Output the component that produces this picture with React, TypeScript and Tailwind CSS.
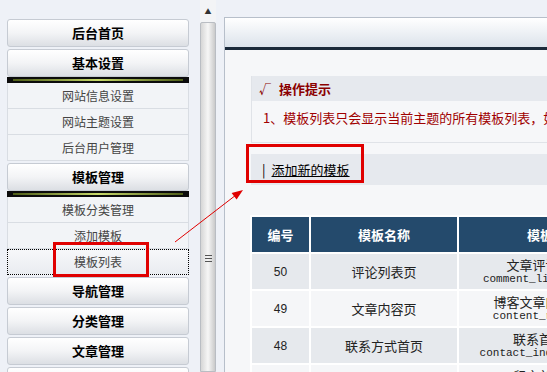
import React from 'react';

const cjk = { fontFamily: '"Noto Sans CJK SC", "Liberation Sans", sans-serif' };

const Header = ({ label }: { label: string }) => (
  <div className="mt-[2px] flex h-[28px] items-center justify-center rounded-[3px] border border-[#c6cbd3] bg-gradient-to-b from-white via-[#f3f4f6] to-[#dcdfe4] text-[13px] font-bold text-black">
    {label}
  </div>
);

const Bar = () => (
  <div className="h-[6px] bg-[#0c0c0c] pt-[2px]">
    <div className="mx-[6px] h-[2px] bg-gradient-to-r from-[#4f5e18] via-[#c8da6a] to-[#4f5e18]" />
  </div>
);

const Item = ({ label, active }: { label: string; active?: boolean }) => (
  <div
    className={
      active
        ? 'flex h-[26px] items-center justify-center border border-dotted border-black bg-gradient-to-b from-[#f7f8fa] to-[#e9ecf0] text-[12px] text-[#444]'
        : 'flex h-[26px] items-center justify-center border-x border-b border-[#d9dde3] bg-[#f2f4f7] text-[12px] text-[#444]'
    }
  >
    {label}
  </div>
);

const rows = [
  { id: 50, name: '评论列表页', desc: '文章评论页', file: 'comment_list.html', bg: 'bg-[#e6e9ed]' },
  { id: 49, name: '文章内容页', desc: '博客文章内容页', file: 'content_r.html', bg: 'bg-[#f5f6f8]' },
  { id: 48, name: '联系方式首页', desc: '联系首页', file: 'contact_index.html', bg: 'bg-[#e6e9ed]' },
  { id: 47, name: '留言板首页', desc: '留言首页', file: 'guestbook_index.html', bg: 'bg-[#f5f6f8]' },
];

export default function App() {
  return (
    <div className="relative flex h-[372px] w-[547px] overflow-hidden bg-[#eef1f7]" style={cjk}>
      {/* sidebar */}
      <div className="ml-[7px] w-[182px] shrink-0 pt-[17px]">
        <Header label="后台首页" />
        <Header label="基本设置" />
        <Bar />
        <Item label="网站信息设置" />
        <Item label="网站主题设置" />
        <Item label="后台用户管理" />
        <Header label="模板管理" />
        <Bar />
        <Item label="模板分类管理" />
        <Item label="添加模板" />
        <Item label="模板列表" active />
        <Header label="导航管理" />
        <Header label="分类管理" />
        <Header label="文章管理" />
        <Header label="" />
      </div>

      {/* scrollbar */}
      <div className="ml-[11px] flex w-[16px] shrink-0 flex-col bg-[#f3f4f6]">
        <div className="flex h-[22px] items-center justify-center text-[7px] leading-none text-[#333]">▲</div>
        <div className="flex-1 rounded-t-[2px] border border-[#b9bdc3] bg-gradient-to-r from-[#d6d6d6] via-[#f6f6f6] to-[#cacaca] pt-[232px]">
          <div className="mx-auto flex w-[7px] flex-col gap-[2px]">
            <div className="h-px bg-[#555]" />
            <div className="h-px bg-[#555]" />
            <div className="h-px bg-[#555]" />
          </div>
        </div>
      </div>

      {/* content */}
      <div className="ml-[8px] mt-[17px] min-w-0 flex-1 overflow-hidden border-l border-t border-[#b7bfca] bg-[#f6f7f9]">
        <div className="w-[460px]">
          <div className="h-[32px] border-b-[3px] border-[#1b2a3a] bg-gradient-to-b from-white to-[#dce3eb]" />

          <div className="ml-[26px] mt-[26px] border-b border-l border-[#e0e3e8]">
            <div className="flex h-[25px] items-center gap-[8px] bg-[#e6e9ee] pl-[7px] text-[13px] font-bold text-[#8b0000]">
              <span className="text-[12px]">√</span>
              <span>操作提示</span>
            </div>
            <div className="h-[41px] whitespace-nowrap pl-[11px] pt-[9px] text-[13px] leading-[16px] text-[#a00000]">
              1、模板列表只会显示当前主题的所有模板列表，如果您需要修改其他主题的模板
            </div>
          </div>

          <div className="ml-[26px] mt-[11px] flex h-[31px] items-center gap-[6px] bg-[#e6e9ee] pl-[11px] text-[13px] text-black">
            <span>|</span>
            <span className="underline">添加新的模板</span>
          </div>

          <table className="ml-[25px] mt-[30px] border-separate border-spacing-[2px] bg-white">
            <thead>
              <tr className="h-[35px] bg-[#244a6c] text-[13px] font-bold text-white">
                <th className="w-[57px] p-0">编号</th>
                <th className="w-[146px] p-0">模板名称</th>
                <th className="w-[160px] p-0 pl-[28px]">模板描述</th>
              </tr>
            </thead>
            <tbody>
              {rows.map((r) => (
                <tr key={r.id} className={`h-[35px] ${r.bg}`}>
                  <td className="p-0 text-center text-[12px] text-[#222]" style={{ fontFamily: '"Liberation Sans", sans-serif' }}>
                    {r.id}
                  </td>
                  <td className="p-0 text-center text-[13px] text-[#222]">{r.name}</td>
                  <td className="p-0 text-center text-[13px] leading-[15px] text-[#222]">
                    <div>{r.desc}</div>
                    <div className="text-[11px]" style={{ fontFamily: '"Liberation Mono", monospace' }}>
                      {r.file}
                    </div>
                  </td>
                </tr>
              ))}
            </tbody>
          </table>
        </div>
      </div>

      {/* annotations */}
      <div className="pointer-events-none absolute left-[53px] top-[242px] h-[35px] w-[96px] border-[3px] border-[#e00000]" />
      <div className="pointer-events-none absolute left-[246px] top-[144px] h-[39px] w-[118px] border-[3px] border-[#e00000]" />
      <svg className="pointer-events-none absolute left-0 top-0" width="547" height="372">
        <line x1="175" y1="242" x2="236" y2="195" stroke="#e00000" strokeWidth="1" />
        <polygon points="243,190 236.6,199.5 231.6,193.1" fill="#e00000" />
      </svg>
    </div>
  );
}
